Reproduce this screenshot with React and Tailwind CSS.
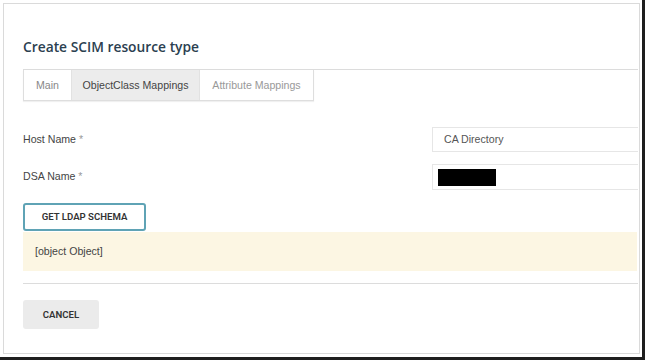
export default function App() {
  const sans = { fontFamily: '"Liberation Sans", Arial, sans-serif' };
  const btn = { fontFamily: 'Roboto, "Open Sans", sans-serif' };
  return (
    <div className="w-[645px] h-[360px] bg-white border-r-[3px] border-b-[3px] border-[#1e1e1e] overflow-hidden" style={sans}>
      <div className="pt-[3px] pl-[3px]">
        <div className="w-[637px] h-[351px] border border-[#dadada] pl-[19px] pr-[1px] flex flex-col">
          <h1
            className="mt-[33px] h-[32px] text-[13.8px] font-semibold text-[#2b4050] leading-[20px]"
            style={{ fontFamily: '"Open Sans", sans-serif' }}
          >
            Create SCIM resource type
          </h1>
          <div className="border-b border-[#dcdcdc]" />
          <div className="flex">
            <div className="flex h-[31px] border-l border-r border-b border-[#dedede] text-[10.6px] shadow-[0_1px_1px_rgba(0,0,0,0.06)]">
              <div className="w-[47px] flex items-center justify-center pt-[2px] text-[#888]">Main</div>
              <div className="w-[129px] flex items-center justify-center pt-[2px] bg-[#ececec] text-[#444] border-l border-r border-[#e2e2e2]">ObjectClass Mappings</div>
              <div className="w-[113px] flex items-center justify-center pt-[2px] text-[#999]">Attribute Mappings</div>
            </div>
          </div>
          <div className="mt-[26px] flex items-center h-[25px]">
            <div className="flex-1 text-[10.6px] text-[#444]">
              Host Name <span className="text-[#999]">*</span>
            </div>
            <div className="w-[206px] h-[25px] border border-[#e6e6e6] border-r-0 flex items-center pl-[11px] text-[10.6px] text-[#555]">
              CA Directory
            </div>
          </div>
          <div className="mt-[12px] flex items-center h-[26px]">
            <div className="flex-1 text-[10.6px] text-[#444]">
              DSA Name <span className="text-[#999]">*</span>
            </div>
            <div className="w-[206px] h-[26px] border border-[#e6e6e6] border-r-0 flex items-center pl-[5px]">
              <div className="w-[58px] h-[17px] bg-black" />
            </div>
          </div>
          <div className="mt-[13px]">
            <button
              className="w-[123px] h-[28px] border-2 border-[#5fa3b5] rounded-[3px] bg-white text-[9.6px] font-semibold text-[#333]"
              style={btn}
            >
              GET LDAP SCHEMA
            </button>
          </div>
          <div className="mt-[1px] mr-[1px] h-[39px] bg-[#fcf6e3] flex items-center pl-[12px] text-[10.6px] text-[#444]">
            [object Object]
          </div>
          <div className="mt-[12px] border-b border-[#dcdcdc]" />
          <div className="mt-[16px]">
            <button
              className="w-[76px] h-[29px] bg-[#ebebeb] rounded-[3px] text-[9.6px] font-semibold text-[#333]"
              style={btn}
            >
              CANCEL
            </button>
          </div>
        </div>
      </div>
    </div>
  );
}
